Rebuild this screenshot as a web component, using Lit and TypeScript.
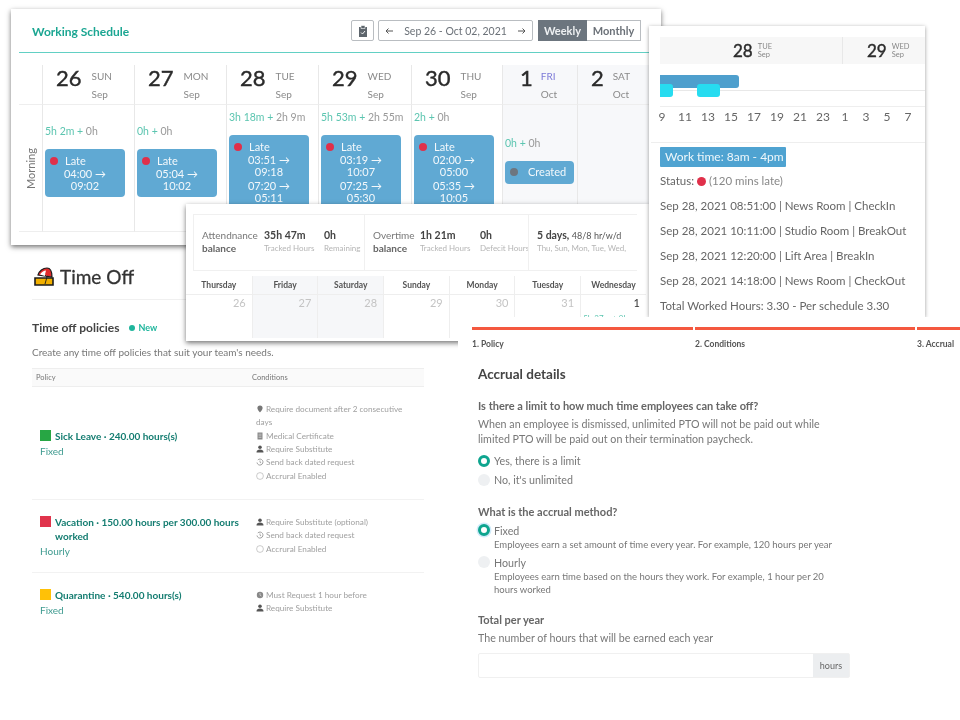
import { LitElement, css, html, svg } from "lit";
import { customElement } from "lit/decorators.js";

interface Day {
  num: string;
  name: string;
  month: string;
  worked?: string;
  extra?: string;
  times?: string[][];
  status?: string;
  pad?: string;
  off?: boolean;
}

const days: Day[] = [
  { num: "26", name: "SUN", month: "Sep", worked: "5h 2m", extra: "0h", times: [["04:00", "09:02"]], pad: "p20" },
  { num: "27", name: "MON", month: "Sep", worked: "0h", extra: "0h", times: [["05:04", "10:02"]], pad: "p20" },
  { num: "28", name: "TUE", month: "Sep", worked: "3h 18m", extra: "2h 9m", times: [["03:51", "09:18"], ["07:20", "05:11"]], pad: "p6" },
  { num: "29", name: "WED", month: "Sep", worked: "5h 53m", extra: "2h 55m", times: [["03:19", "10:07"], ["07:25", "05:30"]], pad: "p6" },
  { num: "30", name: "THU", month: "Sep", worked: "2h", extra: "0h", times: [["02:00", "05:00"], ["05:35", "10:05"]], pad: "p6" },
  { num: "1", name: "FRI", month: "Oct", worked: "0h", extra: "0h", status: "Created", pad: "p32", off: true },
  { num: "2", name: "SAT", month: "Oct", off: true },
];

const hours = ["9", "11", "13", "15", "17", "19", "21", "23", "1", "3", "5", "7"];
const logLines = [
  "Sep 28, 2021 08:51:00 | News Room | CheckIn",
  "Sep 28, 2021 10:11:00 | Studio Room | BreakOut",
  "Sep 28, 2021 12:20:00 | Lift Area | BreakIn",
  "Sep 28, 2021 14:18:00 | News Room | CheckOut",
  "Total Worked Hours: 3.30 - Per schedule 3.30",
];
const calendar = [
  ["Thursday", "26", ""],
  ["Friday", "27", "off"],
  ["Saturday", "28", "off"],
  ["Sunday", "29", ""],
  ["Monday", "30", ""],
  ["Tuesday", "31", ""],
  ["Wednesday", "1", "now"],
];

const icons = {
  pin: svg`<path d="M4 .5a2.6 2.6 0 0 0-2.6 2.6C1.4 5 4 7.5 4 7.5S6.6 5 6.6 3.1A2.6 2.6 0 0 0 4 .5z" fill="#777"/>`,
  doc: svg`<path d="M1.5.5h5v7h-5z" fill="#888"/><path d="M2.5 2.2h3M2.5 3.8h3M2.5 5.4h3" stroke="#ddd" stroke-width=".6"/>`,
  user: svg`<circle cx="4" cy="2.3" r="1.8" fill="#555"/><path d="M.5 7.6c0-2.2 1.5-3 3.5-3s3.5.8 3.5 3z" fill="#555"/>`,
  back: svg`<path d="M1.8 2A3 3 0 1 1 1 4.5" fill="none" stroke="#888" stroke-width=".8"/><path d="M4 2.5V4.3L5.2 5" fill="none" stroke="#888" stroke-width=".7"/>`,
  ring: svg`<circle cx="4" cy="4" r="3.4" fill="none" stroke="#aaa" stroke-width=".6"/>`,
  clock: svg`<circle cx="4" cy="4" r="3.2" fill="#888"/><path d="M4 2v2.2l1.4.8" fill="none" stroke="#ddd" stroke-width=".7"/>`,
};

const policies = [
  {
    cls: "row-a", color: "#27a644", name: "Sick Leave · 240.00 hours(s)", type: "Fixed",
    conds: [["pin", "Require document after 2 consecutive days"], ["doc", "Medical Certificate"], ["user", "Require Substitute"], ["back", "Send back dated request"], ["ring", "Accrural Enabled"]],
  },
  {
    cls: "row-b", color: "#e0344c", name: "Vacation · 150.00 hours per 300.00 hours worked", type: "Hourly",
    conds: [["user", "Require Substitute (optional)"], ["back", "Send back dated request"], ["ring", "Accrural Enabled"]],
  },
  {
    cls: "row-c", color: "#ffc107", name: "Quarantine · 540.00 hours(s)", type: "Fixed",
    conds: [["clock", "Must Request 1 hour before"], ["user", "Require Substitute"]],
  },
];

@customElement("app-root")
export class AppRoot extends LitElement {
  static styles = css`
    :host {
      display: block;
      position: relative;
      width: 960px;
      height: 720px;
      overflow: hidden;
      background: #fff;
      font-family: Lato, "Open Sans", sans-serif;
      color: #555;
      filter: blur(0.4px);
    }
    .win {
      position: absolute;
      background: #fff;
      box-sizing: border-box;
      overflow: hidden;
    }
    .shadow {
      box-shadow: 0 2px 5px rgba(0, 0, 0, 0.55);
    }

    /* working schedule window */
    .schedule {
      left: 11px;
      top: 9px;
      width: 650px;
      height: 236px;
      padding: 0 8px;
    }
    .sch-head {
      display: flex;
      align-items: center;
      box-sizing: border-box;
      height: 44px;
      padding: 0 8px 0 13px;
      border-bottom: 1px solid #62d0c4;
      width: 630px;
    }
    .sch-title {
      flex: 1;
      color: #1ba692;
      font-size: 12px;
      font-weight: 700;
      padding-top: 2px;
    }
    .btn {
      display: flex;
      align-items: center;
      justify-content: center;
      box-sizing: border-box;
      height: 21px;
      border: 1px solid #b9bdc1;
      border-radius: 2px;
      color: #6b7178;
      font-size: 10.5px;
      white-space: nowrap;
    }
    .clip {
      width: 23px;
      margin-right: 4px;
    }
    .range {
      width: 155px;
      margin-right: 5px;
      justify-content: space-between;
      padding: 0 6px;
    }
    .seg {
      display: flex;
    }
    .seg .btn {
      font-size: 11px;
      font-weight: 700;
      border-radius: 0;
    }
    .weekly {
      width: 49px;
      background: #6c757e;
      border-color: #6c757e;
      color: #eef0f2;
    }
    .monthly {
      width: 54px;
      border-left: none;
    }
    .week {
      display: grid;
      grid-template-columns: 23px 92px 92px 92px 93px 91px 75px 72px;
      grid-template-rows: 40px 127px;
      margin-top: 12px;
      width: 630px;
    }
    .corner {
      border-bottom: 1px solid #eee;
    }
    .dh {
      display: flex;
      box-sizing: border-box;
      border-left: 1px solid #e8e8e8;
      border-bottom: 1px solid #eee;
      padding: 1px 0 0 13px;
      gap: 10px;
    }
    .dh.off,
    .dc.off {
      background: #f7f8fa;
    }
    .dh.off {
      padding-left: 17px;
      gap: 8px;
    }
    .dh.sat {
      padding-left: 13px;
      gap: 9px;
    }
    .num {
      font-size: 22px;
      font-weight: 400;
      -webkit-text-stroke: 0.4px #2b2b2b;
      color: #2b2b2b;
      line-height: 24px;
      min-width: 25px;
    }
    .dh.off .num {
      min-width: 12px;
    }
    .dname {
      font-size: 10px;
      color: #8a8a8a;
      line-height: 16px;
      padding-top: 2px;
    }
    .dname.fri span:first-child {
      color: #7d7bd8;
    }
    .dname span {
      display: block;
      margin-bottom: 2px;
    }
    .slot {
      display: flex;
      align-items: center;
      justify-content: center;
      border-bottom: 1px solid #eee;
    }
    .slot span {
      transform: rotate(-90deg);
      font-size: 11px;
      color: #777;
    }
    .dc {
      box-sizing: border-box;
      border-left: 1px solid #e8e8e8;
      border-bottom: 1px solid #eee;
      padding: 0 2px;
    }
    .p20 { padding-top: 20px; }
    .p6 { padding-top: 6px; }
    .p32 { padding-top: 32px; }
    .wk {
      font-size: 10.5px;
      line-height: 13px;
      color: #999;
      margin-bottom: 11px;
      white-space: nowrap;
    }
    .wk b {
      font-weight: 400;
      color: #5cc5b0;
    }
    .shift {
      background: #60a9d3;
      border-radius: 4px;
      color: #f3f8fb;
      width: 80px;
      box-sizing: border-box;
      padding: 5px 0 3px;
      font-size: 11px;
      line-height: 12px;
      text-align: center;
    }
    .flag {
      display: flex;
      align-items: center;
      padding-left: 5px;
      gap: 7px;
      line-height: 14px;
    }
    .dot {
      display: inline-block;
      width: 8px;
      height: 8px;
      border-radius: 50%;
      background: #e0304a;
      flex: none;
    }
    .dot.grey {
      background: #6d7680;
    }
    .pair {
      margin-bottom: 2px;
    }
    .created {
      width: 69px;
      padding: 4px 0 5px;
    }
    .created .flag {
      gap: 10px;
    }

    /* day timeline window */
    .timeline {
      left: 649px;
      top: 26px;
      width: 276px;
      height: 291px;
      padding: 11px 0 0 11px;
      box-shadow: 0 1px 4px rgba(0, 0, 0, 0.4);
    }
    .tl-band {
      display: grid;
      grid-template-columns: 182px 1fr;
      height: 27px;
      background: #f7f7f7;
    }
    .tl-day {
      display: flex;
      align-items: center;
      padding-left: 73px;
      gap: 5px;
    }
    .tl-day + .tl-day {
      border-left: 1px solid #e8e8e8;
      padding-left: 24px;
    }
    .tl-day .num {
      font-size: 17px;
      min-width: 0;
    }
    .tl-day small {
      display: block;
      font-size: 7.5px;
      line-height: 8px;
      color: #888;
    }
    .bars {
      position: relative;
      height: 42px;
      border-bottom: 1px solid #eee;
    }
    .bars .mid {
      position: absolute;
      left: 0;
      right: 0;
      top: 26px;
      border-top: 1px solid #e8e8e8;
    }
    .bar {
      position: absolute;
      border-radius: 0 3px 3px 0;
    }
    .bar.plan {
      left: 0;
      top: 11px;
      width: 79px;
      height: 13px;
      background: #4e9fcd;
    }
    .bar.real {
      top: 20px;
      height: 13px;
      background: #27dcf0;
      border-radius: 3px;
    }
    .ticks {
      display: flex;
      height: 35px;
      margin-left: -9.5px;
      border-bottom: 1px solid #eee;
      font-size: 12px;
      color: #666;
      line-height: 20px;
    }
    .ticks span {
      width: 23px;
      flex: none;
      text-align: center;
    }
    .ticks span.narrow {
      width: 21px;
    }
    .badge {
      background: #4fa3d1;
      color: #eef7fb;
      font-size: 12px;
      line-height: 20px;
      padding-left: 5px;
      width: 126px;
      box-sizing: border-box;
      border-radius: 1px;
      margin-top: 4px;
      white-space: nowrap;
    }
    .log {
      font-size: 11.5px;
      line-height: 25px;
      color: #666;
      white-space: nowrap;
    }
    .log.first {
      margin-top: 1px;
    }
    .log .dot {
      width: 9px;
      height: 9px;
      vertical-align: -1px;
    }
    .log span {
      color: #888;
    }

    /* attendance window */
    .attend {
      left: 186px;
      top: 204px;
      width: 463px;
      height: 137px;
      padding: 10px 0 0 7px;
    }
    .summary {
      display: grid;
      grid-template-columns: 170px 164px 1fr;
      height: 57px;
      width: 444px;
      box-sizing: border-box;
      border: 1px solid #f0f0f0;
      border-right: none;
    }
    .sum {
      display: flex;
      padding: 14px 0 0 8px;
      border-left: 1px solid #f0f0f0;
      font-size: 10.5px;
      line-height: 13px;
    }
    .sum:first-child {
      border-left: none;
    }
    .sum h4 {
      flex: none;
      margin: 0;
      font: inherit;
      font-size: 10px;
      color: #777;
      width: 62px;
    }
    .sum h4.short {
      width: 47px;
    }
    .sum h4 b {
      color: #666;
    }
    .stat {
      flex: none;
      width: 60px;
      font-weight: 700;
      color: #444;
    }
    .stat:last-child {
      width: auto;
    }
    .stat small {
      display: block;
      font-size: 8px;
      font-weight: 400;
      color: #b5b5b5;
      white-space: nowrap;
    }
    .sum .wide i {
      font-style: normal;
      font-size: 9px;
      font-weight: 400;
      color: #555;
    }
    .month {
      display: grid;
      grid-template-columns: repeat(7, 65.7px);
      margin: 5px 0 0 -7px;
    }
    .mc {
      height: 62px;
      text-align: center;
      font-size: 8.5px;
      font-weight: 700;
      line-height: 18px;
      color: #555;
      border-left: 1px solid #eee;
    }
    .mc:first-child {
      border-left: none;
    }
    .mc.off {
      background: #f6f7f9;
    }
    .mc div {
      border-top: 1px solid #eee;
      text-align: right;
      padding: 0 6px 0 0;
      font-size: 11px;
      font-weight: 400;
      color: #c4c4c4;
      line-height: 15px;
    }
    .mc.now div {
      color: #333;
    }
    .mc small {
      display: block;
      text-align: left;
      padding: 3px 0 0 2px;
      color: #5cc5b0;
      font-size: 8px;
      line-height: 10px;
    }

    /* time off page */
    .timeoff {
      left: 32px;
      top: 262px;
      width: 392px;
    }
    .to-head {
      display: flex;
      align-items: center;
      height: 38px;
      box-sizing: border-box;
      gap: 6px;
      padding: 0 0 8px 2px;
      font-size: 19px;
      -webkit-text-stroke: 0.3px #333;
      color: #333;
      border-bottom: 1px solid #f0f0f0;
    }
    .to-sub {
      display: flex;
      align-items: center;
      margin-top: 20px;
      font-size: 12px;
      font-weight: 700;
      line-height: 16px;
      color: #444;
      gap: 10px;
    }
    .new {
      display: flex;
      align-items: center;
      gap: 3px;
      color: #1fb59c;
      font-size: 9px;
    }
    .new i {
      width: 6px;
      height: 6px;
      border-radius: 50%;
      background: #1fb59c;
    }
    .to-desc {
      font-size: 10px;
      color: #777;
      margin-top: 9px;
      line-height: 14px;
    }
    .thead {
      display: grid;
      grid-template-columns: 216px 1fr;
      margin-top: 9px;
      height: 19px;
      box-sizing: border-box;
      padding-left: 4px;
      background: #fafafa;
      border-top: 1px solid #eee;
      border-bottom: 1px solid #eee;
      font-size: 7.5px;
      line-height: 18px;
      color: #777;
    }
    .pol {
      display: grid;
      grid-template-columns: 216px 1fr;
      align-items: center;
      box-sizing: border-box;
      padding-left: 8px;
      border-bottom: 1px solid #f2f2f2;
    }
    .row-a { height: 113px; }
    .row-b { height: 73px; }
    .row-c { height: 58px; border-bottom: none; }
    .pname {
      display: flex;
      gap: 4px;
      color: #137c70;
      font-size: 10px;
      font-weight: 700;
      line-height: 14px;
    }
    .swatch {
      width: 11px;
      height: 11px;
      flex: none;
      margin-top: 1px;
    }
    .ptype {
      font-size: 10px;
      color: #3f9b90;
      line-height: 14px;
      margin-top: 1px;
    }
    .conds {
      font-size: 8.2px;
      line-height: 13.3px;
      color: #a0a0a0;
      width: 152px;
    }
    .conds svg {
      width: 8px;
      height: 8px;
      vertical-align: -1px;
      margin-right: 2px;
    }

    /* accrual form */
    .accrual {
      left: 458px;
      top: 317px;
      width: 502px;
      height: 403px;
      padding: 10px 0 0 14px;
    }
    .steps {
      display: grid;
      grid-template-columns: 221px 220px 60px;
      gap: 0 2px;
      width: 510px;
      font-size: 8.5px;
      font-weight: 700;
      color: #555;
    }
    .steps div {
      border-top: 3px solid #f4583f;
      padding-top: 9px;
      line-height: 11px;
    }
    .form {
      padding-left: 6px;
      width: 374px;
      font-size: 10.7px;
      line-height: 15px;
      color: #777;
    }
    .form h3 {
      margin: 15px 0;
      font-size: 13.5px;
      line-height: 18px;
      font-weight: 700;
      color: #444;
    }
    .form h5 {
      margin: 0;
      font-size: 11px;
      line-height: 15px;
      font-weight: 700;
      color: #666;
      white-space: nowrap;
    }
    .form h5.gap {
      margin-top: 14.5px;
    }
    .form h5.gap-lg {
      margin-top: 16px;
    }
    .form p {
      margin: 3px 0 5px;
      max-width: 355px;
    }
    .form p.tail {
      margin: 3px 0 0;
    }
    .radio {
      display: flex;
      align-items: center;
      gap: 4px;
      height: 19px;
    }
    .radio.tight {
      height: 15px;
    }
    .radio.first {
      margin-top: 4px;
    }
    .radio i {
      width: 12px;
      height: 12px;
      border-radius: 50%;
      background: #eef0f2;
      box-sizing: border-box;
      flex: none;
    }
    .radio i.on {
      background: #fff;
      border: 3.5px solid #0ea58f;
    }
    .radio i.focus {
      box-shadow: 0 0 0 1.5px #d0ebfa;
    }
    .note {
      font-size: 9.5px;
      line-height: 13px;
      padding-left: 16px;
      margin-bottom: 4px;
      max-width: 345px;
      color: #777;
    }
    .input {
      display: flex;
      justify-content: flex-end;
      height: 25px;
      width: 372px;
      box-sizing: border-box;
      border: 1px solid #f0f0f0;
      border-radius: 2px;
      margin-top: 8.5px;
    }
    .input span {
      width: 36px;
      background: #eceef0;
      font-size: 9px;
      line-height: 23px;
      text-align: center;
      color: #666;
    }
  `;

  private condIcon(name: string) {
    return html`<svg viewBox="0 0 8 8">${icons[name as keyof typeof icons]}</svg>`;
  }

  private arrow(left: boolean) {
    return html`<svg width="8" height="8" viewBox="0 0 8 8">
      <path d=${left ? "M8 4H1M3.5 1.5L1 4l2.5 2.5" : "M0 4h7M4.5 1.5L7 4 4.5 6.5"} fill="none" stroke="#555" stroke-width="1" />
    </svg>`;
  }

  private renderDayHead(d: Day) {
    return html`<div class="dh ${d.off ? "off" : ""} ${d.name === "SAT" ? "sat" : ""}">
      <div class="num">${d.num}</div>
      <div class="dname ${d.name === "FRI" ? "fri" : ""}"><span>${d.name}</span><span>${d.month}</span></div>
    </div>`;
  }

  private renderDayCell(d: Day) {
    return html`<div class="dc ${d.off ? "off" : ""} ${d.pad ?? ""}">
      ${d.worked ? html`<div class="wk"><b>${d.worked} +</b> ${d.extra}</div>` : ""}
      ${d.times
        ? html`<div class="shift">
            <div class="flag"><i class="dot"></i>Late</div>
            ${d.times.map((t) => html`<div class="pair">${t[0]} →<br />${t[1]}</div>`)}
          </div>`
        : ""}
      ${d.status
        ? html`<div class="shift created"><div class="flag"><i class="dot grey"></i>${d.status}</div></div>`
        : ""}
    </div>`;
  }

  private renderSchedule() {
    return html`<section class="win shadow schedule">
      <div class="sch-head">
        <div class="sch-title">Working Schedule</div>
        <div class="btn clip">
          <svg width="10" height="12" viewBox="0 0 10 12">
            <path d="M1 2h8v10H1z" fill="#5d656c" />
            <path d="M3 .5h4v3H3z" fill="#5d656c" stroke="#fff" stroke-width=".6" />
            <path d="M3 7.5l1.5 1.5 2.5-3" fill="none" stroke="#fff" stroke-width=".9" />
          </svg>
        </div>
        <div class="btn range">${this.arrow(true)}<span>Sep 26 - Oct 02, 2021</span>${this.arrow(false)}</div>
        <div class="seg">
          <div class="btn weekly">Weekly</div>
          <div class="btn monthly">Monthly</div>
        </div>
      </div>
      <div class="week">
        <div class="corner"></div>
        ${days.map((d) => this.renderDayHead(d))}
        <div class="slot"><span>Morning</span></div>
        ${days.map((d) => this.renderDayCell(d))}
      </div>
    </section>`;
  }

  private renderTimeline() {
    return html`<section class="win timeline">
      <div class="tl-band">
        <div class="tl-day"><div class="num">28</div><div><small>TUE</small><small>Sep</small></div></div>
        <div class="tl-day"><div class="num">29</div><div><small>WED</small><small>Sep</small></div></div>
      </div>
      <div class="bars">
        <div class="mid"></div>
        <div class="bar plan"></div>
        <div class="bar real" style="left:0;width:13px;border-radius:0 3px 3px 0"></div>
        <div class="bar real" style="left:37px;width:23px"></div>
      </div>
      <div class="ticks">
        ${hours.map((h, i) => html`<span class=${i > 7 ? "narrow" : ""}>${h}</span>`)}
      </div>
      <div class="badge">Work time: 8am - 4pm</div>
      <div class="log first">Status: <i class="dot"></i> <span>(120 mins late)</span></div>
      ${logLines.map((l) => html`<div class="log">${l}</div>`)}
    </section>`;
  }

  private renderAttendance() {
    return html`<section class="win shadow attend">
      <div class="summary">
        <div class="sum">
          <h4>Attendnance <b>balance</b></h4>
          <div class="stat">35h 47m<small>Tracked Hours</small></div>
          <div class="stat">0h<small>Remaining</small></div>
        </div>
        <div class="sum">
          <h4 class="short">Overtime <b>balance</b></h4>
          <div class="stat">1h 21m<small>Tracked Hours</small></div>
          <div class="stat">0h<small>Defecit Hours</small></div>
        </div>
        <div class="sum">
          <div class="stat wide">5 days, <i>48/8 hr/w/d</i><small>Thu, Sun, Mon, Tue, Wed,</small></div>
        </div>
      </div>
      <div class="month">
        ${calendar.map(
          ([name, n, state]) => html`<div class="mc ${state}">
            ${name}
            <div>${n}${state === "now" ? html`<small>5h 37m + 0h</small>` : ""}</div>
          </div>`
        )}
      </div>
    </section>`;
  }

  private renderTimeOff() {
    return html`<section class="win timeoff">
      <div class="to-head">
        <svg width="20" height="20" viewBox="0 0 20 20">
          <path d="M1 11h18v7H1z" fill="#f2b000" stroke="#1c1c1c" stroke-width="1.6" />
          <path d="M4 8C5 4 9 1 13 1c3 0 5 3 5 9z" fill="#e02a2a" stroke="#1c1c1c" stroke-width="1.2" />
          <path d="M6 7.500c1-2 4-4 6-4l-1 4 2 2z" fill="#fff" />
          <path d="M11 8l2 2-2 7" fill="none" stroke="#1c1c1c" stroke-width=".9" />
        </svg>
        Time Off
      </div>
      <div class="to-sub">Time off policies <span class="new"><i></i>New</span></div>
      <div class="to-desc">Create any time off policies that suit your team's needs.</div>
      <div class="thead"><span>Policy</span><span>Conditions</span></div>
      ${policies.map(
        (p) => html`<div class="pol ${p.cls}">
          <div>
            <div class="pname"><i class="swatch" style="background:${p.color}"></i><span>${p.name}</span></div>
            <div class="ptype">${p.type}</div>
          </div>
          <div class="conds">
            ${p.conds.map(([ic, text]) => html`<div>${this.condIcon(ic)}${text}</div>`)}
          </div>
        </div>`
      )}
    </section>`;
  }

  private renderAccrual() {
    return html`<section class="win accrual">
      <div class="steps">
        <div>1. Policy</div>
        <div>2. Conditions</div>
        <div>3. Accrual</div>
      </div>
      <div class="form">
        <h3>Accrual details</h3>
        <h5>Is there a limit to how much time employees can take off?</h5>
        <p>When an employee is dismissed, unlimited PTO will not be paid out while limited PTO will be paid out on their termination paycheck.</p>
        <div class="radio"><i class="on"></i>Yes, there is a limit</div>
        <div class="radio"><i></i>No, it's unlimited</div>
        <h5 class="gap">What is the accrual method?</h5>
        <div class="radio tight first"><i class="on focus"></i>Fixed</div>
        <div class="note">Employees earn a set amount of time every year. For example, 120 hours per year</div>
        <div class="radio tight"><i></i>Hourly</div>
        <div class="note">Employees earn time based on the hours they work. For example, 1 hour per 20 hours worked</div>
        <h5 class="gap-lg">Total per year</h5>
        <p class="tail">The number of hours that will be earned each year</p>
        <div class="input"><span>hours</span></div>
      </div>
    </section>`;
  }

  render() {
    return html`
      ${this.renderSchedule()} ${this.renderTimeOff()} ${this.renderAttendance()}
      ${this.renderTimeline()} ${this.renderAccrual()}
    `;
  }
}
